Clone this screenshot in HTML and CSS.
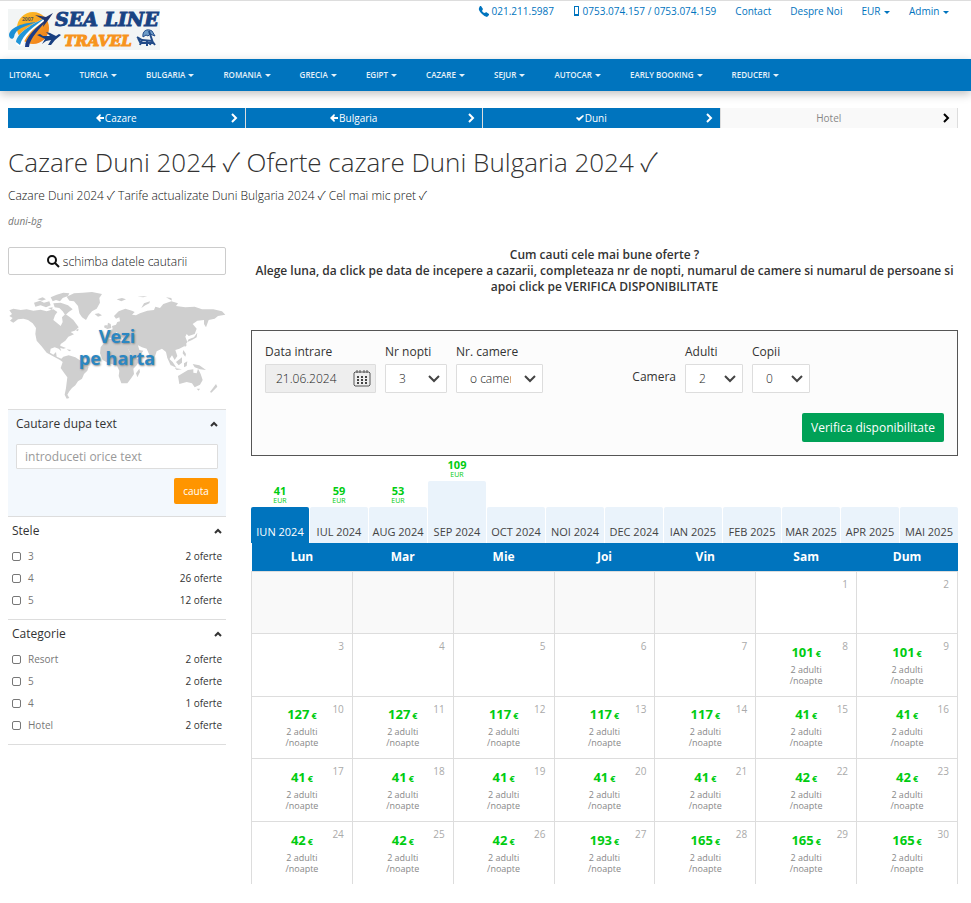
FILE: index.html
```
<!DOCTYPE html>
<html lang="ro">
<head>
    <meta charset="UTF-8">
    <meta name="viewport" content="width=device-width, initial-scale=1.0">
    <title>Cazare Duni 2024 - Sea Line Travel</title>
    <link rel="stylesheet" href="styles.css">
</head>
<body>
    <header class="header">
        <a href="#" class="logo">
            <svg width="152" height="41" viewBox="0 0 152 41" role="img" aria-label="Sea Line Travel">
                <defs>
                    <linearGradient id="sun" x1="0" y1="0" x2="1" y2="1">
                        <stop offset="0" stop-color="#ffc526"/>
                        <stop offset="1" stop-color="#f0781c"/>
                    </linearGradient>
                </defs>
                <rect width="152" height="41" fill="#f2f5f5"/>
                <circle cx="25" cy="19" r="16" fill="url(#sun)"/>
                <path d="M1 26C2 18 15 14 29 13C17 17 7 20 6 28C5 31 1 30 1 26Z" fill="#1b8fd6"/>
                <path d="M8 34C8 24 24 15 39 8L43 8C28 17 18 25 15 36C12 38 8 37 8 34Z" fill="#fff"/>
                <path d="M8 33C9 24 24 15 39 8C26 17 15 25 12 36Z" fill="#2196d8"/>
                <path d="M17 38C17 29 27 18 42 8C31 20 22 29 21 38Z" fill="#1c3c87"/>
                <path d="M27 6L38 8L45 4L41 10L35 18L36 11Z" fill="#22356f"/>
                <text x="14" y="12" class="logo-year">2007</text>
                <path d="M29 26L32 25L35 27L42 27L38 23L42 24L48 27L51 25L53 26L47 31L43 36L40 36L43 31L38 32L34 35L37 30Z" fill="#173f80"/>
                <text x="47" y="17" class="logo-sea">SEA LINE</text>
                <text x="56" y="37" class="logo-travel">TRAVEL</text>
                <path d="M135 28C134 22 139 19 144 22L147 27L142 25L140 27L138 26Z" fill="#6d9cc8" stroke="#214b88"/>
                <path d="M141 22L145 34M129 28L134 31L144 32L147 36M130 29L133 35M134 31L132 36M139 32L139 37M133 34H145M143 32L142 36" fill="none" stroke="#214b88" stroke-width="2"/>
            </svg>
        </a>
        <nav class="top-links">
            <a href="tel:0212115987"><svg class="icon" width="11" height="11" viewBox="0 0 11 11"><path d="M1 2L2 0H3L5 3L4 5Q5 7 7 7L8 6L11 8V9L9 11Q7 11 4 8Q0 4 1 2Z"/></svg> 021.211.5987</a>
            <a href="tel:0753074157"><svg class="icon" width="7" height="10" viewBox="0 0 7 10"><path fill-rule="evenodd" d="M1 0H6V10H1ZM2 1V8H5V1Z"/></svg> 0753.074.157 / 0753.074.159</a>
            <a href="#">Contact</a>
            <a href="#">Despre Noi</a>
            <a href="#">EUR <span class="caret"></span></a>
            <a href="#">Admin <span class="caret"></span></a>
        </nav>
    </header>

    <nav class="navbar">
        <a href="#">LITORAL <span class="caret"></span></a>
        <a href="#">TURCIA <span class="caret"></span></a>
        <a href="#">BULGARIA <span class="caret"></span></a>
        <a href="#">ROMANIA <span class="caret"></span></a>
        <a href="#">GRECIA <span class="caret"></span></a>
        <a href="#">EGIPT <span class="caret"></span></a>
        <a href="#">CAZARE <span class="caret"></span></a>
        <a href="#">SEJUR <span class="caret"></span></a>
        <a href="#">AUTOCAR <span class="caret"></span></a>
        <a href="#">EARLY BOOKING <span class="caret"></span></a>
        <a href="#">REDUCERI <span class="caret"></span></a>
    </nav>

    <div class="container">
        <div class="steps">
            <a href="#" class="step active">
                <span><svg class="icon" width="8" height="8" viewBox="0 0 8 8"><path d="M0 4L4 0L5 1L4 3H8V5H4L5 7L4 8Z"/></svg>Cazare</span>
                <svg width="7" height="10" viewBox="0 0 7 10"><path d="M1 1L5 5L1 9" fill="none" stroke="currentColor" stroke-width="2"/></svg>
            </a>
            <a href="#" class="step active">
                <span><svg class="icon" width="8" height="8" viewBox="0 0 8 8"><path d="M0 4L4 0L5 1L4 3H8V5H4L5 7L4 8Z"/></svg>Bulgaria</span>
                <svg width="7" height="10" viewBox="0 0 7 10"><path d="M1 1L5 5L1 9" fill="none" stroke="currentColor" stroke-width="2"/></svg>
            </a>
            <a href="#" class="step active">
                <span><svg class="icon" width="8" height="8" viewBox="0 0 8 8"><path d="M0 4L1 3L3 4L7 1L8 2L3 7Z"/></svg>Duni</span>
                <svg width="7" height="10" viewBox="0 0 7 10"><path d="M1 1L5 5L1 9" fill="none" stroke="currentColor" stroke-width="2"/></svg>
            </a>
            <a href="#" class="step">
                <span>Hotel</span>
                <svg width="7" height="10" viewBox="0 0 7 10"><path d="M1 1L5 5L1 9" fill="none" stroke="#000" stroke-width="2"/></svg>
            </a>
        </div>

        <h1>Cazare Duni 2024 ✓ Oferte cazare Duni Bulgaria 2024 ✓</h1>
        <p class="subtitle">Cazare Duni 2024 ✓ Tarife actualizate Duni Bulgaria 2024 ✓ Cel mai mic pret ✓</p>
        <p class="slug">duni-bg</p>

        <div class="columns">
            <aside class="sidebar">
                <button type="button" class="btn-change"><svg class="icon" width="13" height="13" viewBox="0 0 13 13"><circle cx="5" cy="5" r="4" fill="none" stroke="currentColor" stroke-width="2"/><path d="M8 8L12 12" stroke="currentColor" stroke-width="2"/></svg> schimba datele cautarii</button>

                <a href="#" class="map">
                    <svg viewBox="24 150 654 340">
                        <!-- America -->
                        <path d="M28 211L40 206L62 210L80 208L100 212L122 209L140 214L160 208L172 216L165 226L160 240L172 250L182 258L188 246L186 232L196 222L208 230L220 240L236 262L224 272L212 276L222 283L205 290L196 302L182 312L180 322L184 334L176 326L164 322L152 326L150 338L160 344L168 336L170 350L184 356L190 350L206 346L226 352L242 362L246 372L266 380L262 392L252 402L246 416L234 424L226 436L216 444L208 454L202 464L208 474L200 476L194 464L198 444L202 412L192 398L182 384L188 366L180 360L162 350L140 338L124 318L110 302L106 282L108 264L98 250L84 240L70 236L54 238L40 248L30 242L38 234L28 228L36 222Z"/>
                        <path d="M102 188L120 182L132 188L148 184L152 196L138 202L122 196L106 200ZM112 178L128 172L138 178L126 182ZM152 172L170 164L190 158L208 160L204 168L188 174L180 184L168 180L158 184ZM160 190L182 188L204 196L218 208L206 216L196 226L188 214L178 204L164 202ZM144 204L158 202L156 210ZM226 270L236 266L234 274ZM168 320L182 318L198 324L190 326ZM200 328L214 330L208 334Z"/>
                        <!-- Groenlanda, Islanda -->
                        <path d="M200 170L222 160L248 158L276 156L306 162L298 174L300 188L290 206L276 214L266 226L258 240L246 232L238 220L234 198L222 184L208 182ZM284 222L296 220L306 226L294 230Z"/>
                        <!-- Europa si Asia -->
                        <path d="M322 290L326 272L338 268L336 258L348 254L352 246L360 244L358 232L348 236L342 228L356 214L376 206L396 212L404 216L396 224L408 226L420 220L442 212L462 210L466 200L480 204L490 192L514 184L534 190L528 198L556 202L584 200L606 208L640 208L666 214L676 224L654 228L644 236L626 240L618 262L612 252L612 240L592 242L578 252L590 266L584 282L566 288L560 282L556 290L562 306L554 318L538 326L526 330L532 348L524 360L516 346L508 358L520 378L512 376L502 354L498 336L486 326L470 334L464 352L458 360L448 344L440 326L426 322L414 316L418 330L430 332L418 350L402 360L388 334L378 316L374 302L384 298L386 292L370 296L360 286L350 276L342 284L334 294Z"/>
                        <path d="M324 248L332 252L334 264L320 268ZM314 256L322 256L320 266L312 262ZM350 178L366 174L378 178L364 184ZM424 204L432 190L450 184L448 190L436 196ZM412 170L442 168L430 172ZM498 172L514 174L516 182ZM592 278L590 292L576 300L562 306L566 298L582 292ZM556 306L560 316L554 322Z"/>
                        <!-- Africa -->
                        <path d="M326 298L348 294L356 302L376 304L386 330L400 356L420 358L410 376L400 386L402 402L394 414L382 430L364 430L356 408L358 392L350 376L326 370L308 360L300 340L302 322L312 308ZM408 400L418 386L420 396L412 412Z"/>
                        <!-- Australia si insulele -->
                        <path d="M534 408L554 396L564 390L580 388L580 398L590 400L594 386L602 402L608 420L600 434L584 442L576 430L560 426L538 432ZM528 366L546 352L546 368L536 376ZM502 352L518 366L530 384L518 378ZM552 370L562 364L560 378L552 382ZM578 372L598 376L618 390L600 388L584 382ZM550 330L558 342L556 350L548 340ZM524 384L546 388L530 390ZM590 446L600 446L596 452ZM648 432L652 440L634 458L630 456Z"/>
                    </svg>
                    <span>Vezi<br>pe harta</span>
                </a>

                <section class="filter filter-text">
                    <h3><label for="cauta">Cautare dupa text</label> <svg width="8" height="6" viewBox="0 0 8 6"><path d="M1 5L4 2L7 5" fill="none" stroke="currentColor" stroke-width="2"/></svg></h3>
                    <input type="text" id="cauta" placeholder="introduceti orice text">
                    <button type="button" class="btn-search">cauta</button>
                </section>

                <section class="filter">
                    <h3>Stele <svg width="8" height="6" viewBox="0 0 8 6"><path d="M1 5L4 2L7 5" fill="none" stroke="currentColor" stroke-width="2"/></svg></h3>
                    <label class="option"><input type="checkbox"> 3 <span>2 oferte</span></label>
                    <label class="option"><input type="checkbox"> 4 <span>26 oferte</span></label>
                    <label class="option"><input type="checkbox"> 5 <span>12 oferte</span></label>
                </section>

                <section class="filter">
                    <h3>Categorie <svg width="8" height="6" viewBox="0 0 8 6"><path d="M1 5L4 2L7 5" fill="none" stroke="currentColor" stroke-width="2"/></svg></h3>
                    <label class="option"><input type="checkbox"> Resort <span>2 oferte</span></label>
                    <label class="option"><input type="checkbox"> 5 <span>2 oferte</span></label>
                    <label class="option"><input type="checkbox"> 4 <span>1 oferte</span></label>
                    <label class="option"><input type="checkbox"> Hotel <span>2 oferte</span></label>
                </section>
            </aside>

            <main class="content">
                <p class="help">Cum cauti cele mai bune oferte ?<br>Alege luna, da click pe data de incepere a cazarii, completeaza nr de nopti, numarul de camere si numarul de persoane si apoi click pe VERIFICA DISPONIBILITATE</p>

                <form class="search-box">
                    <div class="fields">
                        <div class="field field-date">
                            <label for="data">Data intrare</label>
                            <input type="text" id="data" value="21.06.2024" readonly>
                            <svg class="calendar-icon" width="18" height="18" viewBox="0 0 18 18"><path d="M2 3H16L17 4V16L16 17H2L1 16V4Z" fill="none" stroke="#555"/><path d="M4 1V4M7 1V4M11 1V4M14 1V4" stroke="#555"/><path d="M4 8H14M4 11H14M4 14H14" stroke="#444" stroke-width="2" stroke-dasharray="2 2"/></svg>
                        </div>
                        <div class="field field-nights">
                            <label for="nopti">Nr nopti</label>
                            <select id="nopti"><option>3</option></select>
                        </div>
                        <div class="field field-rooms">
                            <label for="camere">Nr. camere</label>
                            <select id="camere"><option>o camera</option></select>
                        </div>
                        <span class="room">Camera</span>
                        <div class="field field-people">
                            <label for="adulti">Adulti</label>
                            <select id="adulti"><option>2</option></select>
                        </div>
                        <div class="field field-people">
                            <label for="copii">Copii</label>
                            <select id="copii"><option>0</option></select>
                        </div>
                    </div>
                    <button type="button" class="btn-check">Verifica disponibilitate</button>
                </form>

                <div class="months">
                    <a href="#" class="month active"><span class="price">41<small>EUR</small></span><span class="tab">IUN 2024</span></a>
                    <a href="#" class="month"><span class="price">59<small>EUR</small></span><span class="tab">IUL 2024</span></a>
                    <a href="#" class="month"><span class="price">53<small>EUR</small></span><span class="tab">AUG 2024</span></a>
                    <a href="#" class="month high"><span class="price">109<small>EUR</small></span><span class="tab">SEP 2024</span></a>
                    <a href="#" class="month"><span class="tab">OCT 2024</span></a>
                    <a href="#" class="month"><span class="tab">NOI 2024</span></a>
                    <a href="#" class="month"><span class="tab">DEC 2024</span></a>
                    <a href="#" class="month"><span class="tab">IAN 2025</span></a>
                    <a href="#" class="month"><span class="tab">FEB 2025</span></a>
                    <a href="#" class="month"><span class="tab">MAR 2025</span></a>
                    <a href="#" class="month"><span class="tab">APR 2025</span></a>
                    <a href="#" class="month"><span class="tab">MAI 2025</span></a>
                </div>

                <table class="calendar">
                    <thead>
                        <tr><th>Lun</th><th>Mar</th><th>Mie</th><th>Joi</th><th>Vin</th><th>Sam</th><th>Dum</th></tr>
                    </thead>
                    <tbody id="days"></tbody>
                </table>
            </main>
        </div>
    </div>

    <script>
        // Tarifele pentru iunie 2024, incepand cu ziua 8
        var prices = [101, 101,
            127, 127, 117, 117, 117, 41, 41,
            41, 41, 41, 41, 41, 42, 42,
            42, 42, 42, 193, 165, 165, 165];
        var firstPriced = 8;
        var emptyDays = 5;
        var totalDays = 30;

        function showCalendar() {
            var html = "";
            for (var i = 0; i < emptyDays + totalDays; i++) {
                var day = i - emptyDays + 1;
                if (i % 7 === 0) html += "<tr>";
                if (day < 1) {
                    html += '<td class="empty"></td>';
                } else {
                    html += '<td><span class="day">' + day + "</span>";
                    if (day >= firstPriced) {
                        html += '<a href="#" class="offer"><strong>' + prices[day - firstPriced] +
                            '<small>€</small></strong>2 adulti<br>/noapte</a>';
                    }
                    html += "</td>";
                }
                if (i % 7 === 6) html += "</tr>";
            }
            document.getElementById("days").innerHTML = html;
        }

        showCalendar();
    </script>
</body>
</html>
```
FILE: styles.css
```
* {
    box-sizing: border-box;
}
body {
    font-family: "Open Sans", "Noto Sans CJK JP", sans-serif;
    font-size: 12px;
    color: #333;
    background-color: #fff;
    margin: 0;
    border-top: 1px solid #ddd;
}
a {
    color: inherit;
    text-decoration: none;
}
input, select, button {
    font-family: inherit;
}
.icon {
    fill: currentColor;
    vertical-align: middle;
    margin-top: -2px;
}
.caret {
    display: inline-block;
    border-left: 3px solid transparent;
    border-right: 3px solid transparent;
    border-top: 3px solid;
    vertical-align: middle;
    margin-left: 1px;
}

/* Header */
.header {
    display: flex;
    justify-content: space-between;
    align-items: flex-start;
    height: 58px;
    padding: 8px 22px 0 8px;
}
.logo svg {
    display: block;
}
.logo-year {
    font: bold 5px "Open Sans", sans-serif;
    fill: #555;
}
.logo-sea {
    font: italic bold 19px "DejaVu Serif", serif;
    fill: #194383;
    stroke: #194383;
}
.logo-travel {
    font: italic bold 15px "DejaVu Serif", serif;
    fill: #f7941d;
    stroke: #f7941d;
}
.top-links {
    display: flex;
    gap: 19px;
    font-size: 10px;
    line-height: 15px;
    margin-top: -5px;
    color: #0074be;
}

/* Meniu principal */
.navbar {
    display: flex;
    gap: 29px;
    padding: 0 9px;
    background-color: #0074be;
    color: #e6f1f8;
    font-size: 8px;
    font-weight: 600;
    line-height: 32px;
    box-shadow: 0 3px 10px rgba(0, 0, 0, 0.25);
}

.container {
    padding: 17px 13px 0 8px;
}
.steps {
    display: flex;
}
.step {
    flex: 1;
    display: flex;
    align-items: center;
    height: 20px;
    padding-right: 7px;
    border-right: 1px solid #ddd;
    background-color: #f9f9f9;
    color: #888;
    font-size: 10px;
}
.step span {
    flex: 1;
    padding-right: 6px;
    text-align: center;
}
.step .icon {
    margin-right: 1px;
}
.step.active {
    background-color: #0074be;
    color: #fff;
}
h1 {
    margin: 16px 0 0;
    font-size: 26px;
    font-weight: 300;
    line-height: 36px;
}
.subtitle {
    margin: 6px 0 0;
    color: #111;
    font-weight: 300;
    line-height: 20px;
}
.slug {
    margin: 7px 0 0;
    font-size: 10px;
    font-style: italic;
    line-height: 16px;
    color: #777;
}
.columns {
    display: flex;
    gap: 25px;
    margin-top: 18px;
}

/* Coloana din stanga */
.sidebar {
    width: 218px;
    flex-shrink: 0;
}
.btn-change {
    display: block;
    width: 100%;
    height: 28px;
    padding: 0;
    border: 1px solid #ccc;
    border-radius: 2px;
    background-color: #fff;
    color: #111;
    font-size: 12px;
    font-weight: 300;
}
.map {
    display: block;
    position: relative;
    margin: 15px 0 6px;
}
.map svg {
    display: block;
    width: 100%;
    fill: #cfcfcf;
}
.map span {
    position: absolute;
    inset: 0;
    display: flex;
    align-items: center;
    justify-content: center;
    text-align: center;
    font-size: 18px;
    font-weight: 700;
    line-height: 22px;
    color: #2b87c3;
    text-shadow: 1px 1px 2px #888;
}
.filter {
    border-top: 1px solid #ddd;
    padding: 4px 4px 7px;
}
.filter:last-child {
    border-bottom: 1px solid #ddd;
}
.filter h3 {
    display: flex;
    justify-content: space-between;
    align-items: center;
    margin: 0 0 5px;
    font-size: 12px;
    font-weight: 400;
    line-height: 20px;
}
.filter-text {
    padding: 4px 8px 12px;
    background-color: #f3f8fd;
}
.filter-text input {
    display: block;
    width: 100%;
    height: 25px;
    margin-top: 10px;
    padding: 0 8px;
    border: 1px solid #ddd;
    border-radius: 1px;
    font-size: 12px;
}
.filter-text input::placeholder {
    color: #999;
}
.btn-search {
    display: block;
    margin: 9px 0 0 auto;
    width: 44px;
    height: 26px;
    padding: 0;
    border: 0;
    border-radius: 2px;
    background-color: #ff9500;
    color: #fff;
    font-size: 10px;
}
.option {
    display: flex;
    align-items: center;
    font-size: 10px;
    line-height: 20px;
    margin-bottom: 2px;
    color: #777;
}
.option input {
    appearance: none;
    width: 9px;
    height: 9px;
    margin: 0 7px 0 0;
    border: 1px solid #777;
    border-radius: 2px;
}
.option span {
    margin-left: auto;
    color: #333;
}

/* Continut */
.content {
    flex: 1;
    min-width: 0;
}
.help {
    margin: 0;
    font-weight: 600;
    line-height: 16px;
    text-align: center;
}
.search-box {
    margin-top: 35px;
    padding: 12px 13px 13px;
    border: 1px solid #555;
    background-color: #fcfcfc;
}
.fields {
    display: flex;
    align-items: flex-end;
    gap: 9px;
}
.field {
    position: relative;
}
.field label {
    display: block;
    margin-bottom: 4px;
    line-height: 17px;
}
.field input, .field select {
    display: block;
    width: 100%;
    height: 29px;
    padding: 0 31px 0 13px;
    border: 1px solid #ddd;
    border-radius: 1px;
    color: #222;
    font-size: 12px;
    font-weight: 300;
}
.field select {
    appearance: none;
    background: #fff url("data:image/svg+xml,%3Csvg xmlns='http://www.w3.org/2000/svg' width='12' height='8'%3E%3Cpath d='M1 1L6 6L11 1' fill='none' stroke='%23444' stroke-width='2'/%3E%3C/svg%3E") no-repeat right 6px center;
}
.field input {
    padding: 0 10px;
    background-color: #eee;
}
.field-date {
    width: 111px;
}
.calendar-icon {
    position: absolute;
    right: 5px;
    bottom: 6px;
}
.field-nights {
    width: 62px;
}
.field-rooms {
    width: 87px;
}
.field-people {
    width: 58px;
}
.room {
    margin-left: auto;
    line-height: 32px;
}
.field-people:last-child {
    margin-right: 134px;
}
.btn-check {
    display: block;
    margin: 20px 0 0 auto;
    width: 142px;
    height: 29px;
    padding: 0;
    border: 0;
    border-radius: 2px;
    background-color: #00a157;
    color: #fff;
    font-size: 12px;
}
.months {
    display: flex;
    align-items: flex-end;
    gap: 1px;
    margin-top: 3px;
}
.month {
    flex: 1 1 0;
    min-width: 0;
    text-align: center;
    white-space: nowrap;
}
.price {
    display: block;
    margin-bottom: 2px;
    font-size: 11px;
    font-weight: 700;
    line-height: 12px;
    color: #0c1;
}
.price small {
    display: block;
    font-size: 7px;
    font-weight: 400;
    line-height: 8px;
}
.tab {
    display: block;
    height: 36px;
    padding-top: 17px;
    border-radius: 2px 2px 0 0;
    background-color: #eaf3fb;
    color: #444;
    font-size: 11px;
    line-height: 16px;
}
.high .tab {
    height: 62px;
    padding-top: 43px;
}
.active .tab {
    background-color: #0074be;
    color: #fff;
}

/* Calendar */
.calendar {
    width: 100%;
    height: 341px;
    table-layout: fixed;
    border-collapse: collapse;
}
.calendar th {
    height: 28px;
    padding: 0;
    background-color: #0074be;
    color: #fff;
    font-size: 12px;
    font-weight: 700;
}
.calendar td {
    position: relative;
    height: 62px;
    padding: 0;
    border: 1px solid #ddd;
    text-align: center;
    vertical-align: middle;
}
.calendar tr:last-child td {
    border-bottom: 0;
}
.calendar .empty {
    background-color: #f9f9f9;
}
.day {
    position: absolute;
    top: 5px;
    right: 8px;
    font-size: 10px;
    line-height: 14px;
    color: #aaa;
}
.offer {
    display: block;
    font-size: 9px;
    line-height: 11px;
    color: #888;
}
.offer strong {
    display: block;
    margin-bottom: 2px;
    font-size: 13px;
    line-height: 16px;
    color: #0c1;
}
.offer small {
    margin-left: 2px;
    font-size: 9px;
}
```
